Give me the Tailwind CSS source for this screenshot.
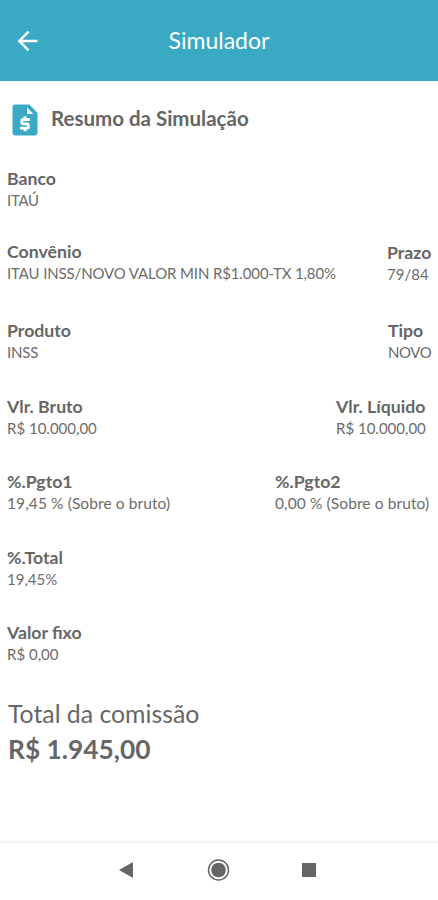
<!DOCTYPE html>
<html lang="pt-BR">
  <head>
    <meta charset="UTF-8" />
    <meta name="viewport" content="width=device-width, initial-scale=1.0" />
    <title>Simulador</title>
    <script src="https://cdn.jsdelivr.net/npm/@tailwindcss/browser@4"></script>
  </head>
  <body class="bg-white">
    <div class="flex flex-col w-[438px] h-[900px] overflow-hidden font-['Lato',sans-serif] text-[#666666] whitespace-nowrap">
      <!-- Cabeçalho -->
      <header class="grid grid-cols-[1fr_auto_1fr] items-center h-[81px] px-[17px] bg-[#3aa9c4] text-white shrink-0">
        <svg class="w-[22px] h-[22px]" viewBox="0 0 22 22" fill="none" stroke="currentColor" stroke-width="2.500">
          <path d="M20.500 11H3M11.500 1.700L2.400 11l9.100 9.300" />
        </svg>
        <h1 class="text-[23px]">Simulador</h1>
      </header>

      <main class="flex-1 px-[7px]">
        <div class="flex items-center h-[77px] pl-[5px] gap-[13px]">
          <svg class="w-[26px] h-[32px]" viewBox="0 0 26 32">
            <path d="M3 .5h14.500l8 8.500v19.500a3 3 0 0 1-3 3H3.500a3 3 0 0 1-3-3V3a2.500 2.500 0 0 1 2.500-2.500z" fill="#3aa9c4" />
            <path d="M15 3.500v6.500h6.500z" fill="#fff" />
            <path d="M17.800 15.500H11a1.200 1.200 0 0 0-1.200 1.200v1.900a1.200 1.200 0 0 0 1.200 1.200h4.200a1.200 1.200 0 0 1 1.200 1.200v1.900a1.200 1.200 0 0 1-1.200 1.200H8M13 12.300v3M13 24.300v3" fill="none" stroke="#fff" stroke-width="2.800" />
          </svg>
          <h2 class="text-[20.5px] font-bold pb-0.5">Resumo da Simulação</h2>
        </div>

        <section class="flex flex-col pt-[10px] text-[15px] leading-[21px] text-[#6c6c6c]">
          <div class="h-[73px]">
            <h3 class="text-[17.7px] leading-[22px] font-bold text-[#666666]">Banco</h3>
            <p class="tracking-[-0.3px]">ITAÚ</p>
          </div>
          <div class="flex justify-between h-[79px]">
            <div>
              <h3 class="text-[17.7px] leading-[22px] font-bold text-[#666666]">Convênio</h3>
              <p class="tracking-[-0.13px]">ITAU INSS/NOVO VALOR MIN R$1.000-TX 1,80%</p>
            </div>
            <div class="w-[44px] pt-px">
              <h3 class="text-[17.7px] leading-[22px] font-bold text-[#666666]">Prazo</h3>
              <p>79/84</p>
            </div>
          </div>
          <div class="flex justify-between h-[76px]">
            <div>
              <h3 class="text-[17.7px] leading-[22px] font-bold text-[#666666]">Produto</h3>
              <p class="tracking-[-0.2px]">INSS</p>
            </div>
            <div class="w-[43px]">
              <h3 class="text-[17.7px] leading-[22px] font-bold text-[#666666]">Tipo</h3>
              <p class="tracking-[-0.45px]">NOVO</p>
            </div>
          </div>
          <div class="flex justify-between h-[75px]">
            <div>
              <h3 class="text-[17.7px] leading-[22px] font-bold text-[#666666]">Vlr. Bruto</h3>
              <p>R$ 10.000,00</p>
            </div>
            <div class="w-[95px]">
              <h3 class="text-[17.7px] leading-[22px] font-bold text-[#666666]">Vlr. Líquido</h3>
              <p>R$ 10.000,00</p>
            </div>
          </div>
          <div class="flex justify-between h-[76px]">
            <div>
              <h3 class="text-[17.7px] leading-[22px] font-bold text-[#666666]">%.Pgto1</h3>
              <p class="text-[15.5px] tracking-[0.1px]">19,45 % (Sobre o bruto)</p>
            </div>
            <div class="w-[156px]">
              <h3 class="text-[17.7px] leading-[22px] font-bold text-[#666666]">%.Pgto2</h3>
              <p class="text-[15.5px] tracking-[0.1px]">0,00 % (Sobre o bruto)</p>
            </div>
          </div>
          <div class="h-[75px]">
            <h3 class="text-[17.7px] leading-[22px] font-bold text-[#666666]">%.Total</h3>
            <p>19,45%</p>
          </div>
          <div class="h-[75px]">
            <h3 class="text-[17.7px] leading-[22px] font-bold text-[#666666]">Valor fixo</h3>
            <p>R$ 0,00</p>
          </div>
        </section>

        <!-- Total -->
        <section class="pl-px">
          <p class="text-[24.8px] leading-[34px]">Total da comissão</p>
          <p class="text-[26.3px] leading-[36px] font-bold">R$ 1.945,00</p>
        </section>
      </main>

      <!-- Barra de navegação do Android -->
      <nav class="flex items-center h-[59px] border-t-2 border-[#f3f3f3] shrink-0 pl-[119px] pb-[3px] text-[#666666]">
        <svg class="w-[14px] h-[16px]" viewBox="0 0 14 16" fill="currentColor"><path d="M0 8L14 0v16z" /></svg>
        <svg class="w-[24px] h-[24px] ml-[73px]" viewBox="0 0 24 24">
          <circle cx="12.500" cy="12" r="10" fill="none" stroke="currentColor" stroke-width="1.500" />
          <circle cx="12.500" cy="12" r="7.300" fill="currentColor" />
        </svg>
        <div class="size-[14px] ml-[72px] bg-[#666666]"></div>
      </nav>
    </div>
  </body>
</html>
